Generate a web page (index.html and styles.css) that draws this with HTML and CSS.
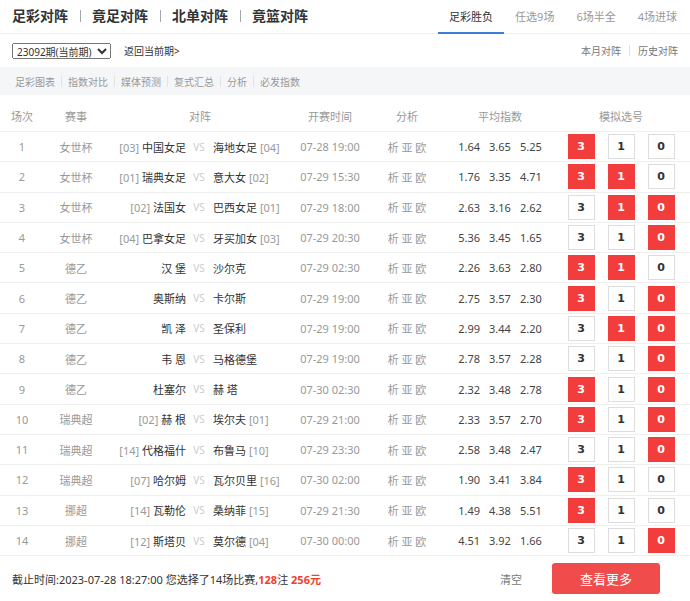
FILE: index.html
```html
<!DOCTYPE html>
<html lang="zh-CN">
<head>
<meta charset="utf-8">
<title>足彩对阵</title>
<link rel="stylesheet" href="styles.css">
</head>
<body>
<div class="page">
  <div class="topbar">
    <div class="titles">
      <span class="title">足彩对阵</span><span class="tsep"></span>
      <span class="title">竟足对阵</span><span class="tsep"></span>
      <span class="title">北单对阵</span><span class="tsep"></span>
      <span class="title">竟篮对阵</span>
    </div>
    <div class="tabs">
      <span class="tab active">足彩胜负</span>
      <span class="tab">任选9场</span>
      <span class="tab">6场半全</span>
      <span class="tab">4场进球</span>
    </div>
  </div>

  <div class="subbar">
    <select class="issue"><option>23092期(当前期)</option></select>
    <span class="back">返回当前期&gt;</span>
    <div class="history">
      <span>本月对阵</span><span class="hsep"></span><span>历史对阵</span>
    </div>
  </div>

  <div class="navbar">
    <span>足彩图表</span><span class="nsep"></span>
    <span>指数对比</span><span class="nsep"></span>
    <span>媒体预测</span><span class="nsep"></span>
    <span>复式汇总</span><span class="nsep"></span>
    <span>分析</span><span class="nsep"></span>
    <span>必发指数</span>
  </div>

  <div class="table">
    <div class="row head">
      <div>场次</div><div>赛事</div><div>对阵</div><div>开赛时间</div><div>分析</div><div>平均指数</div><div>模拟选号</div>
    </div>
    <div id="rows"></div>
  </div>

  <div class="footer">
    <div class="summary">截止时间:2023-07-28 18:27:00 您选择了14场比赛,<b>128</b>注 <b>256元</b></div>
    <span class="clear">清空</span>
    <span class="more">查看更多</span>
  </div>
</div>
<script src="app.js"></script>
</body>
</html>
```

FILE: app.js
```js
var data = [
  [1,"女世杯","[03]","中国女足","海地女足","[04]","07-28 19:00",["1.64","3.65","5.25"],[1,0,0]],
  [2,"女世杯","[01]","瑞典女足","意大女","[02]","07-29 15:30",["1.76","3.35","4.71"],[1,1,0]],
  [3,"女世杯","[02]","法国女","巴西女足","[01]","07-29 18:00",["2.63","3.16","2.62"],[0,1,1]],
  [4,"女世杯","[04]","巴拿女足","牙买加女","[03]","07-29 20:30",["5.36","3.45","1.65"],[0,0,1]],
  [5,"德乙","","汉 堡","沙尔克","","07-29 02:30",["2.26","3.63","2.80"],[1,1,0]],
  [6,"德乙","","奥斯纳","卡尔斯","","07-29 19:00",["2.75","3.57","2.30"],[1,0,1]],
  [7,"德乙","","凯 泽","圣保利","","07-29 19:00",["2.99","3.44","2.20"],[0,1,1]],
  [8,"德乙","","韦 恩","马格德堡","","07-29 19:00",["2.78","3.57","2.28"],[0,0,1]],
  [9,"德乙","","杜塞尔","赫 塔","","07-30 02:30",["2.32","3.48","2.78"],[1,0,1]],
  [10,"瑞典超","[02]","赫 根","埃尔夫","[01]","07-29 21:00",["2.33","3.57","2.70"],[1,0,1]],
  [11,"瑞典超","[14]","代格福什","布鲁马","[10]","07-29 23:30",["2.58","3.48","2.47"],[0,0,1]],
  [12,"瑞典超","[07]","哈尔姆","瓦尔贝里","[16]","07-30 02:00",["1.90","3.41","3.84"],[1,0,0]],
  [13,"挪超","[14]","瓦勒伦","桑纳菲","[15]","07-29 21:30",["1.49","4.38","5.51"],[1,0,0]],
  [14,"挪超","[12]","斯塔贝","莫尔德","[04]","07-30 00:00",["4.51","3.92","1.66"],[0,0,1]]
];
var html = "";
var labels = ["3","1","0"];
data.forEach(function (d) {
  var home = (d[2] ? '<span class="rank">' + d[2] + '</span> ' : '') + d[3];
  var away = d[4] + (d[5] ? ' <span class="rank">' + d[5] + '</span>' : '');
  var odds = d[7].map(function (o) { return '<span>' + o + '</span>'; }).join('');
  var picks = d[8].map(function (s, i) {
    return '<span class="pick' + (s ? ' on' : '') + '">' + labels[i] + '</span>';
  }).join('');
  html += '<div class="row">' +
    '<div class="num">' + d[0] + '</div>' +
    '<div class="league">' + d[1] + '</div>' +
    '<div class="vs"><span class="home">' + home + '</span><span class="vsmark">VS</span><span class="away">' + away + '</span></div>' +
    '<div class="time">' + d[6] + '</div>' +
    '<div class="ana">析 亚 欧</div>' +
    '<div class="odds">' + odds + '</div>' +
    '<div class="picks">' + picks + '</div>' +
    '</div>';
});
document.getElementById("rows").innerHTML = html;
```

FILE: styles.css
```css
* { box-sizing: border-box; }
body {
  margin: 0;
  background: #fff;
  font-family: "Noto Sans", "Noto Sans CJK SC", sans-serif;
  color: #333;
}
.page { width: 690px; }

.topbar {
  height: 34px;
  display: flex;
  justify-content: space-between;
  align-items: stretch;
  padding: 0 2px 0 12px;
  border-bottom: 1px solid #eee;
}
.titles { display: flex; align-items: center; padding-bottom: 2px; }
.title { font-size: 14px; font-weight: bold; color: #333; line-height: 20px; }
.tsep { width: 1px; height: 12px; background: #aaa; margin: 0 11px 0 12px; }
.tabs { display: flex; align-items: stretch; margin-bottom: -1px; }
.tab {
  display: flex;
  align-items: center;
  padding: 0 11px;
  font-size: 11px;
  color: #999;
  border-bottom: 2px solid transparent;
}
.tab.active { color: #333; border-bottom-color: #3b7fd8; }

.subbar {
  height: 33px;
  display: flex;
  align-items: center;
  padding: 0 12px;
}
.issue {
  width: 99px;
  height: 16px;
  font-size: 10px;
  padding: 0;
  color: #333;
  font-family: "Noto Sans", "Noto Sans CJK SC", sans-serif;
}
.back { font-size: 10px; margin-left: 13px; color: #333; }
.history { margin-left: auto; display: flex; align-items: center; font-size: 10px; color: #777; }
.hsep { width: 1px; height: 11px; background: #e2e2e2; margin: 0 8px; }

.navbar {
  height: 28px;
  background: #f5f6f8;
  display: flex;
  align-items: center;
  padding-left: 15px;
  font-size: 10px;
  color: #999;
}
.nsep { width: 1px; height: 11px; background: #e3e3e3; margin: 0 6px; }

.table { margin-top: 6px; }
.row {
  display: grid;
  grid-template-columns: 44px 64px 184px 76px 78px 108px 134px;
  align-items: center;
  height: 30.3px;
  border-bottom: 1px solid #efefef;
  font-size: 11px;
  text-align: center;
}
.row.head { height: 31px; color: #999; }
.num, .league, .time, .ana { color: #999; }
.vs {
  display: grid;
  grid-template-columns: 78px 26px 1fr;
  align-items: center;
  white-space: nowrap;
}
.home { text-align: right; color: #333; }
.away { text-align: left; padding-left: 1px; color: #333; }
.rank { color: #999; }
.vsmark { color: #ccc; font-size: 10px; }
.odds { display: flex; justify-content: center; gap: 9px; color: #444; }
.picks { display: flex; justify-content: center; gap: 13px; }
.pick {
  width: 27px;
  height: 25px;
  border: 1px solid #ddd;
  display: flex;
  align-items: center;
  justify-content: center;
  font-family: "DejaVu Sans", sans-serif;
  font-weight: bold;
  font-size: 11px;
  color: #333;
  background: #fff;
}
.pick.on { background: #f33c3c; border-color: #f33c3c; color: #fff; }

.footer {
  height: 45px;
  display: flex;
  align-items: center;
  padding: 0 30px 0 12px;
}
.summary { flex: 1; font-size: 11px; color: #333; }
.summary b { color: #f3402e; }
.clear { font-size: 11px; color: #777; margin-right: 30px; }
.more {
  width: 108px;
  height: 31px;
  border-radius: 3px;
  background: #f14c4c;
  color: #fff;
  font-size: 13px;
  display: flex;
  align-items: center;
  justify-content: center;
}
```
